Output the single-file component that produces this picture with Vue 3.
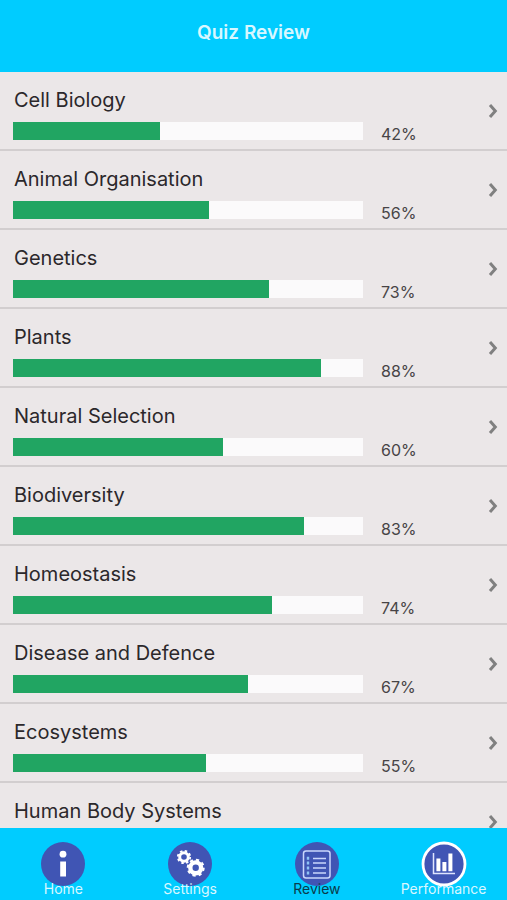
<script setup>
import { ref } from 'vue'

const topics = [
  { name: 'Cell Biology', score: 42 },
  { name: 'Animal Organisation', score: 56 },
  { name: 'Genetics', score: 73 },
  { name: 'Plants', score: 88 },
  { name: 'Natural Selection', score: 60 },
  { name: 'Biodiversity', score: 83 },
  { name: 'Homeostasis', score: 74 },
  { name: 'Disease and Defence', score: 67 },
  { name: 'Ecosystems', score: 55 },
  { name: 'Human Body Systems', score: null },
]

const tabs = [
  { id: 'home', label: 'Home' },
  { id: 'settings', label: 'Settings' },
  { id: 'review', label: 'Review' },
  { id: 'performance', label: 'Performance' },
]

const current = ref('review')
</script>

<template>
  <div class="screen">
    <header class="header">
      <h1 class="title">Quiz Review</h1>
    </header>

    <main class="topics">
      <button v-for="topic in topics" :key="topic.name" type="button" class="topic">
        <span class="details">
          <span class="name">{{ topic.name }}</span>
          <span v-if="topic.score !== null" class="result">
            <span class="track">
              <span class="fill" :style="{ width: topic.score + '%' }"></span>
            </span>
            <span class="score">{{ topic.score }}%</span>
          </span>
        </span>
        <svg class="chevron" viewBox="0 0 10 16" aria-hidden="true">
          <path d="M2 2 L7.3 8 L2 14" />
        </svg>
      </button>
    </main>

    <nav class="tabs">
      <button
        v-for="tab in tabs"
        :key="tab.id"
        type="button"
        class="tab"
        :class="{ current: current === tab.id }"
        @click="current = tab.id"
      >
        <svg class="icon" viewBox="0 0 46 46" aria-hidden="true">
          <circle cx="23" cy="23" r="22" fill="#4055b4" />
          <g v-if="tab.id === 'home'" fill="#fff">
            <circle cx="23" cy="13.2" r="3.4" />
            <rect x="20.2" y="20.5" width="5.8" height="15" />
          </g>
          <g v-else-if="tab.id === 'settings'" fill="none" stroke="#fff">
            <circle cx="17" cy="16" r="4.3" stroke-width="3" />
            <circle cx="17" cy="16" r="6.2" stroke-width="1.8" stroke-dasharray="2.5 2.37" />
            <circle cx="28.7" cy="26.8" r="5.4" stroke-width="4.4" />
            <circle cx="28.7" cy="26.8" r="8" stroke-width="2" stroke-dasharray="3.2 3.08" />
          </g>
          <g v-else-if="tab.id === 'review'" fill="none" stroke="#c9d6fb" stroke-width="1.5">
            <rect x="9.5" y="10" width="26.5" height="27" rx="2.5" />
            <path d="M19 17.5 H32 M19 22 H32 M19 27 H32 M19 32 H32" />
            <path
              d="M14 15.8 V18.8 M14 20.5 V23.5 M14 25.5 V28.5 M14 30.5 V33.5"
              stroke="#8fc4f5"
              stroke-width="2.4"
            />
          </g>
          <g v-else>
            <circle cx="23" cy="23" r="21" fill="none" stroke="#fff" stroke-width="2.8" />
            <path d="M12.5 12 V32.5 H34" fill="none" stroke="#dfe5ff" stroke-width="1.5" />
            <path d="M15.4 17.5 h4 v12.7 h-4 z M21.4 21 h4 v9.2 h-4 z M27.4 12.5 h4 v17.7 h-4 z" fill="#fff" />
          </g>
        </svg>
        <span class="label">{{ tab.label }}</span>
      </button>
    </nav>
  </div>
</template>

<style>
body {
  margin: 0;
  background: #ebe7e8;
}
</style>

<style scoped>
.screen {
  display: flex;
  flex-direction: column;
  height: 100vh;
  background: #ebe7e8;
  font-family: Inter, Roboto, "Liberation Sans", sans-serif;
}

button {
  margin: 0;
  border: 0;
  background: none;
  font: inherit;
  color: inherit;
  cursor: pointer;
}

.header {
  flex: none;
  padding: 21px 0 27px;
  background: #00ccff;
}

.title {
  margin: 0;
  font-size: 19px;
  line-height: 24px;
  font-weight: 600;
  text-align: center;
  color: #d8f7ff;
}

.topics {
  flex: 1;
  min-height: 0;
  overflow-y: auto;
  scrollbar-width: none;
}

.topic {
  display: flex;
  align-items: center;
  justify-content: space-between;
  width: 100%;
  height: 79px;
  padding: 0 9px 0 13px;
  border-bottom: 2px solid #d2cecf;
  text-align: left;
}

.details {
  display: flex;
  flex: 1;
  flex-direction: column;
  align-self: flex-start;
  gap: 8px;
  padding-top: 14px;
}

.name {
  padding-left: 1px;
  font-size: 20px;
  line-height: 28px;
  color: #2b282b;
}

.result {
  display: flex;
  align-items: flex-start;
  gap: 18px;
}

.track {
  flex: 1;
  height: 18px;
  background: #fbfafb;
}

.fill {
  display: block;
  height: 100%;
  background: #21a562;
}

.score {
  width: 107px;
  height: 18px;
  font-size: 16px;
  line-height: 24px;
  color: #474446;
}

.chevron {
  flex: none;
  width: 10px;
  height: 16px;
  fill: none;
  stroke: #808080;
  stroke-width: 3;
}

.tabs {
  display: flex;
  flex: none;
  background: #00ccff;
}

.tab {
  display: flex;
  flex: 1 1 0;
  flex-direction: column;
  align-items: center;
  min-width: 0;
  padding: 13px 0 1px;
  color: #d8f7ff;
}

.icon {
  width: 46px;
  height: 46px;
}

.label {
  position: relative;
  margin-top: -8px;
  font-size: 14px;
  line-height: 20px;
}

.current {
  color: #0b3b4a;
}
</style>
